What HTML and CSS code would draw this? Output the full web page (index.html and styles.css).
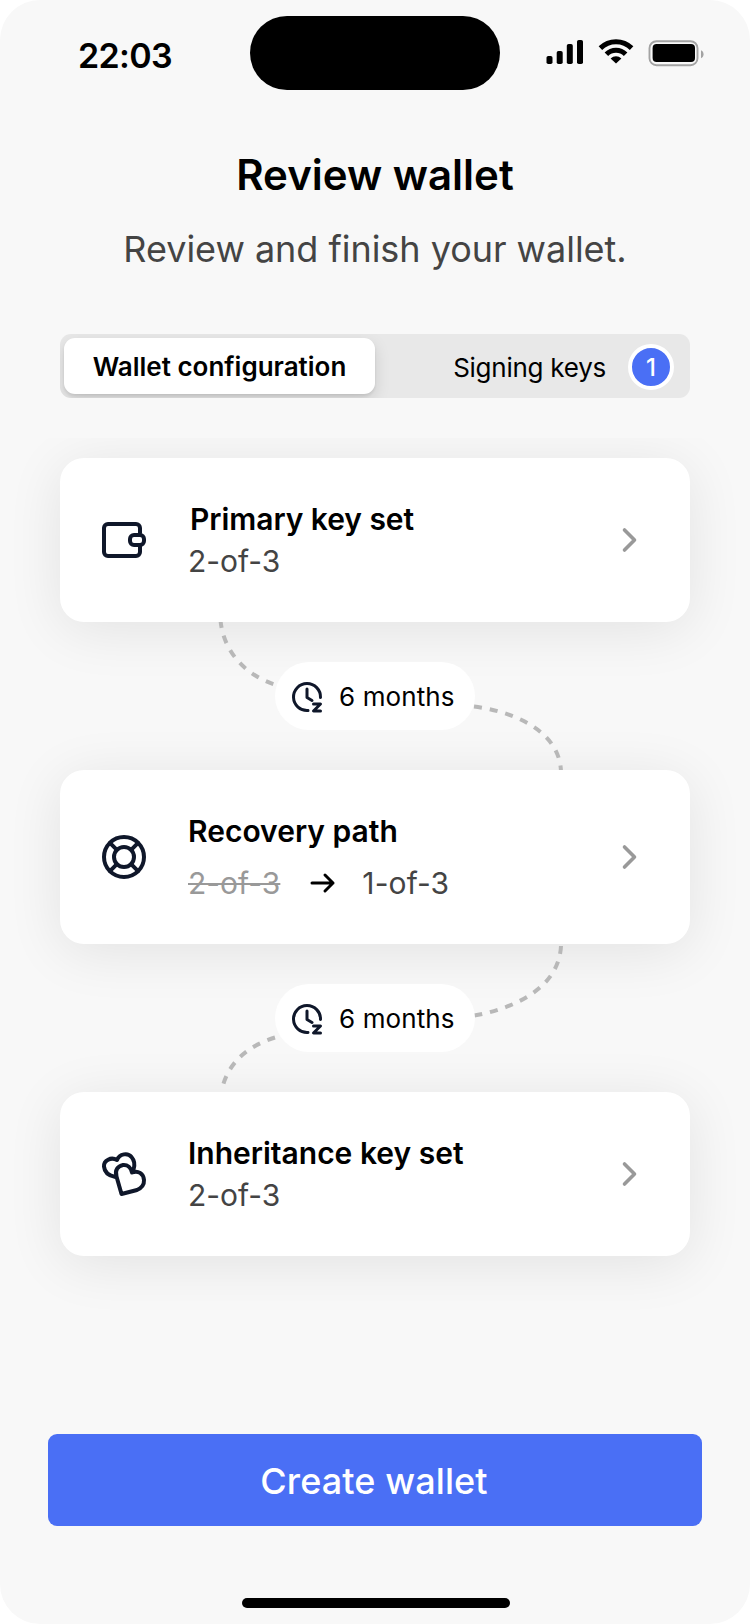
FILE: index.html
```html
<!DOCTYPE html>
<html lang="en">
<head>
<meta charset="utf-8">
<title>Review wallet</title>
<link rel="stylesheet" href="styles.css">
</head>
<body>
<main class="screen">
  <header class="status">
    <div class="clock">22:03</div>
    <div class="island"></div>
    <svg class="indicators" viewBox="0 0 160 30" width="160" height="30">
      <g>
        <rect x="2.5" y="18" width="6" height="8" rx="1.8"/>
        <rect x="12.7" y="13" width="6" height="13" rx="1.8"/>
        <rect x="22.8" y="6" width="6" height="20" rx="1.8"/>
        <rect x="33" y="2" width="6" height="24" rx="1.8"/>
      </g>
      <g fill="none" stroke="#000" stroke-width="5">
        <path d="M56.4 10.100a22.200 22.200 0 0 1 31.200 0"/>
        <path d="M62.400 16.300a13.600 13.600 0 0 1 19.200 0"/>
      </g>
      <path d="M66.600 20.400a8 8 0 0 1 10.800 0L72 25.600z"/>
      <rect x="105.500" y="3.200" width="48" height="24" rx="7" fill="none" stroke="#a3a3a3" stroke-width="1.900"/>
      <rect x="108.600" y="6" width="42.400" height="18" rx="4"/>
      <path d="M157 12.200c3.400 1.300 3.400 6.700 0 8z" fill="#a3a3a3"/>
    </svg>
  </header>

  <div class="heading">
    <h1 class="title">Review wallet</h1>
    <p class="subtitle">Review and finish your wallet.</p>
  </div>

  <div class="tabs">
    <div class="tab tab-active">Wallet configuration</div>
    <div class="tab tab-keys"><span class="tab-label">Signing keys</span><span class="badge">1</span></div>
  </div>

  <section class="flow">
    <article class="card">
      <svg class="icon" viewBox="0 0 48 48" width="48" height="48">
        <path d="M40 17V12a4 4 0 0 0-4-4H8a4 4 0 0 0-4 4v24a4 4 0 0 0 4 4h28a4 4 0 0 0 4-4v-7"/>
        <rect x="30" y="19" width="14" height="10" rx="4"/>
      </svg>
      <div class="card-text primary">
        <h2 class="card-title">Primary key set</h2>
        <p class="policy">2-of-3</p>
      </div>
      <svg class="chevron" viewBox="0 0 20 28" width="20" height="28"><path d="M4.500 4l10 10-10 10"/></svg>
    </article>

    <div class="link">
      <svg class="curve" viewBox="0 0 630 148" width="630" height="148">
        <path d="M160.500-2C163 28 184 53 216 63"/>
        <path d="M414 84.500C456 90 500 110 501 150"/>
      </svg>
      <div class="delay">
        <svg class="snooze" viewBox="0 0 34 34" width="34" height="34">
          <path d="M30.500 17.500A13.500 13.500 0 1 0 18 30.500"/>
          <path d="M17 9v8.500l5 3"/>
          <path d="M23.500 24h7l-7 7h7"/>
        </svg>
        <span>6 months</span>
      </div>
    </div>

    <article class="card card-recovery">
      <svg class="icon" viewBox="0 0 48 48" width="48" height="48">
        <circle cx="24" cy="24" r="20"/>
        <circle cx="24" cy="24" r="10"/>
        <path d="M9.900 9.900l7 7M31.100 31.100l7 7M31.100 16.900l7-7M9.900 38.100l7-7"/>
      </svg>
      <div class="card-text">
        <h2 class="card-title">Recovery path</h2>
        <p class="policy policy-change">
          <span class="policy-old">2-of-3</span>
          <svg class="arrow" viewBox="0 0 26 22" width="26" height="22"><path d="M2 11h21M15 3l8 8-8 8"/></svg>
          <span class="policy-new">1-of-3</span>
        </p>
      </div>
      <svg class="chevron" viewBox="0 0 20 28" width="20" height="28"><path d="M4.500 4l10 10-10 10"/></svg>
    </article>

    <div class="link">
      <svg class="curve" viewBox="0 0 630 148" width="630" height="148">
        <path d="M501 2C499 42 458 64 412 72"/>
        <path d="M215 93.500C188 102 169 118 162.500 143"/>
      </svg>
      <div class="delay">
        <svg class="snooze" viewBox="0 0 34 34" width="34" height="34">
          <path d="M30.500 17.500A13.500 13.500 0 1 0 18 30.500"/>
          <path d="M17 9v8.500l5 3"/>
          <path d="M23.500 24h7l-7 7h7"/>
        </svg>
        <span>6 months</span>
      </div>
    </div>

    <article class="card">
      <svg class="icon" viewBox="0 0 48 48" width="48" height="48">
        <path d="M15.500 27C10 26 4.500 23 4 16.500C3.600 10.500 11 6.500 17 10C19.500 3.500 28 2.500 31.500 7C35 11 35 15 33.500 19.500"/>
        <path d="M21.500 44L16.500 26.500C14.500 20 18 16 23 15C27.500 14.500 31 18 32 22.500C38 20 43.500 23.500 44 30C44.300 35 41.500 38 37 40Z"/>
      </svg>
      <div class="card-text">
        <h2 class="card-title">Inheritance key set</h2>
        <p class="policy">2-of-3</p>
      </div>
      <svg class="chevron" viewBox="0 0 20 28" width="20" height="28"><path d="M4.500 4l10 10-10 10"/></svg>
    </article>
  </section>

  <button class="create">Create wallet</button>
  <div class="home-bar"></div>
</main>
</body>
</html>
```

FILE: styles.css
```css
* {
  box-sizing: border-box;
}

body {
  margin: 0;
  background: #fff;
  font-family: Inter, "Liberation Sans", sans-serif;
  color: #000;
}

h1, h2, p {
  margin: 0;
}

.screen {
  width: 750px;
  height: 1624px;
  display: flex;
  flex-direction: column;
  align-items: center;
  background: #f8f8f8;
  border-radius: 40px;
  overflow: hidden;
}

.status {
  width: 750px;
  height: 90px;
  flex: none;
  display: grid;
  grid-template-columns: 250px 250px 250px;
  padding-top: 16px;
}

.clock {
  padding-top: 20px;
  text-align: center;
  font-size: 34px;
  line-height: 40px;
  font-weight: 600;
  letter-spacing: -0.7px;
}

.island {
  height: 74px;
  background: #000;
  border-radius: 37px;
}

.indicators {
  margin: 22px 0 0 44px;
}

.heading {
  padding-top: 60px;
  text-align: center;
}

.title {
  font-size: 42px;
  line-height: 50px;
  font-weight: 600;
}

.subtitle {
  padding-top: 27px;
  font-size: 36px;
  line-height: 44px;
  letter-spacing: -0.03px;
  color: #444;
}

.tabs {
  width: 630px;
  height: 64px;
  flex: none;
  margin-top: 63px;
  padding: 4px;
  display: flex;
  background: #e8e8e8;
  border-radius: 11px;
  overflow: hidden;
  font-size: 26px;
}

.tab {
  width: 311px;
  height: 56px;
  display: flex;
  align-items: center;
  justify-content: center;
}

.tab-active {
  padding-top: 1px;
  background: #fff;
  border-radius: 11px;
  box-shadow: 0 6px 16px rgba(0, 0, 0, 0.13), 0 2px 3px rgba(0, 0, 0, 0.08);
  font-weight: 600;
}

.tab-keys {
  justify-content: flex-end;
  gap: 22px;
  padding: 2px 12px 0 0;
}

.tab-label {
  letter-spacing: -0.25px;
}

.badge {
  width: 46px;
  height: 46px;
  display: flex;
  align-items: center;
  justify-content: center;
  border: 4px solid #fff;
  border-radius: 50%;
  background: #4a6ff5;
  color: #fff;
  font-size: 24px;
  font-weight: 500;
}

.flow {
  width: 750px;
  height: 912px;
  flex: none;
  margin-top: 40px;
  padding: 20px 60px 0;
  overflow: hidden;
}

.card {
  height: 164px;
  display: flex;
  align-items: center;
  padding: 0 50px 0 40px;
  background: #fff;
  border-radius: 24px;
  box-shadow: 0 8px 56px rgba(0, 0, 0, 0.09);
}

.card-recovery {
  height: 174px;
}

.icon {
  flex: none;
  fill: none;
  stroke: #0f172a;
  stroke-width: 4;
  stroke-linecap: round;
  stroke-linejoin: round;
}

.card-text {
  flex: 1;
  padding-left: 40px;
}

.primary .card-title {
  padding-left: 2px;
  letter-spacing: -0.05px;
}

.card-title {
  font-size: 30px;
  line-height: 42px;
  font-weight: 600;
}

.policy {
  font-size: 30px;
  line-height: 42px;
  color: #444;
}

.policy-change {
  display: flex;
  align-items: center;
  margin-top: 10px;
}

.policy-old {
  color: #999;
  text-decoration: line-through;
  text-decoration-thickness: 2px;
}

.policy-new {
  letter-spacing: 0.1px;
}

.arrow {
  margin: 0 26px 0 30px;
  fill: none;
  stroke: #000;
  stroke-width: 3;
  stroke-linecap: round;
  stroke-linejoin: round;
}

.chevron {
  flex: none;
  fill: none;
  stroke: #999;
  stroke-width: 3.6;
  stroke-linecap: round;
  stroke-linejoin: round;
}

.link {
  height: 148px;
  padding: 40px 0 0 215px;
  position: relative;
}

.curve {
  position: absolute;
  top: 0;
  left: 0;
  fill: none;
  stroke: #b8b8b8;
  stroke-width: 4;
  stroke-dasharray: 8 8;
}

.delay {
  position: relative;
  width: 200px;
  height: 68px;
  display: flex;
  align-items: center;
  gap: 15px;
  padding: 1px 0 0 15px;
  background: #fff;
  border-radius: 34px;
  font-size: 26px;
  letter-spacing: 0.1px;
}

.snooze {
  fill: none;
  stroke: #0f172a;
  stroke-width: 3;
  stroke-linecap: round;
  stroke-linejoin: round;
}

.create {
  width: 654px;
  height: 92px;
  flex: none;
  margin-top: 84px;
  padding: 2px 2px 0 0;
  border: 0;
  border-radius: 9px;
  background: #4a6ff5;
  color: #fff;
  font-family: inherit;
  font-size: 36px;
  font-weight: 500;
  letter-spacing: 0.1px;
}

.home-bar {
  width: 268px;
  height: 10px;
  flex: none;
  margin: 72px 0 0 2px;
  border-radius: 5px;
  background: #000;
}
```
